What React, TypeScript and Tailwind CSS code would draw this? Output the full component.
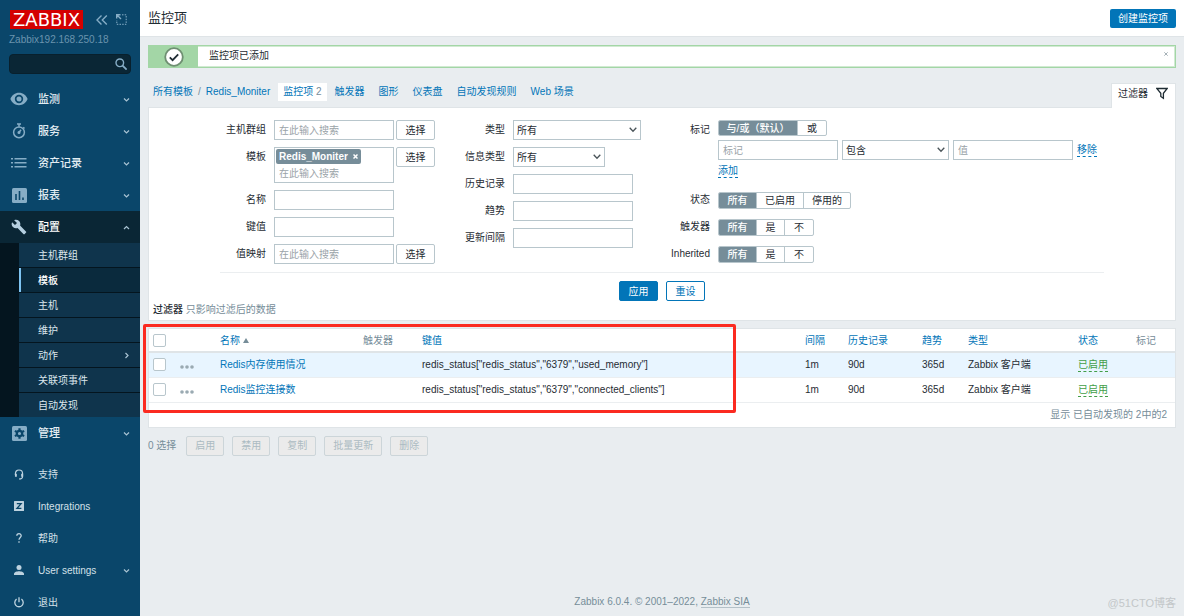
import React from "react";

type IconName =
  | "eye" | "watch" | "list" | "chart" | "wrench" | "gear"
  | "support" | "z" | "help" | "user" | "power";

function NavIcon({ name }: { name: IconName }) {
  switch (name) {
    case "eye":
      return (
        <svg width="18" height="14" viewBox="0 0 18 14" aria-hidden="true">
          <path fill="currentColor" fillRule="evenodd" d="M9 0.8C5 0.8 1.8 3.3.4 7 1.8 10.7 5 13.2 9 13.2s7.200-2.500 8.600-6.200C16.200 3.300 13 .8 9 .8Zm0 10.400A4.200 4.200 0 1 1 9 2.800a4.200 4.200 0 0 1 0 8.400Zm0-1.700a2.500 2.500 0 1 0 0-5 2.500 2.500 0 0 0 0 5Z" />
        </svg>
      );
    case "watch":
      return (
        <svg width="14" height="16" viewBox="0 0 14 16" fill="none" stroke="currentColor" strokeWidth="1.500" aria-hidden="true">
          <circle cx="7" cy="9.300" r="5.400" />
          <path d="M5 1.100h4M7 1.500v2.200M11.200 4.200l1.300 1.300M7 9.500l2-2.800" />
          <circle cx="7" cy="9.500" r="0.800" fill="currentColor" />
        </svg>
      );
    case "list":
      return (
        <svg width="16" height="12" viewBox="0 0 16 12" fill="none" stroke="currentColor" strokeWidth="1.500" aria-hidden="true">
          <path d="M0 1.800h2M0 5.800h2M0 9.800h2M3.500 1.800h12M3.500 5.800h12M3.500 9.800h12" />
        </svg>
      );
    case "chart":
      return (
        <svg width="15" height="15" viewBox="0 0 15 15" aria-hidden="true">
          <rect width="15" height="15" rx="1.500" fill="currentColor" />
          <path d="M4 6v6M7.500 3v9M11 9.500V12" stroke="#0a466a" strokeWidth="1.600" />
        </svg>
      );
    case "wrench":
      return (
        <svg width="16" height="16" viewBox="0 0 24 24" aria-hidden="true">
          <path fill="currentColor" d="m22.700 19-9.100-9.100c.9-2.300.4-5-1.500-6.900-2-2-5-2.400-7.400-1.300L9 6 6 9 1.600 4.700C.4 7.100.9 10.100 2.900 12.100c1.900 1.900 4.600 2.400 6.900 1.500l9.100 9.100c.4.400 1 .4 1.400 0l2.300-2.300c.5-.4.5-1.100.1-1.400z" />
        </svg>
      );
    case "gear":
      return (
        <svg width="15" height="15" viewBox="0 0 15 15" aria-hidden="true">
          <rect width="15" height="15" rx="1.500" fill="currentColor" />
          <circle cx="7.500" cy="7.500" r="2.700" fill="none" stroke="#0a466a" strokeWidth="2.200" />
          <path d="M7.500 2.200v2M7.500 10.800v2M2.900 4.850l1.700 1M10.400 9.150l1.700 1M2.900 10.150l1.700-1M10.400 5.850l1.700-1" stroke="#0a466a" strokeWidth="2.200" />
        </svg>
      );
    case "support":
      return (
        <svg width="10" height="11" viewBox="0 0 10 11" fill="none" stroke="currentColor" strokeWidth="1.200" aria-hidden="true">
          <path d="M1.400 6V4.800C1.400 2.500 2.900 1 5 1s3.600 1.500 3.600 3.800V7.200C8.600 8.900 7.300 10 5 10" />
          <path d="M1.900 4.700v3M8.100 4.700v3" strokeWidth="1.900" />
        </svg>
      );
    case "z":
      return (
        <svg width="10" height="10" viewBox="0 0 10 10" aria-hidden="true">
          <rect width="10" height="10" rx="0.500" fill="currentColor" />
          <path d="M2.800 2.700h4.300L3 7.300h4.400" fill="none" stroke="#0a466a" strokeWidth="1.300" />
        </svg>
      );
    case "help":
      return (
        <svg width="8" height="10" viewBox="0 0 8 10" fill="none" stroke="currentColor" strokeWidth="1.300" aria-hidden="true">
          <path d="M1.800 2.800C1.900 0 6.200 0 6.200 2.700 6.200 4.400 4 4.500 4 6.800M4 8.300v1.500" />
        </svg>
      );
    case "user":
      return (
        <svg width="10" height="10" viewBox="0 0 10 10" fill="currentColor" aria-hidden="true">
          <circle cx="5" cy="2.600" r="2.500" />
          <path d="M0 10V8.700C0 7 3.200 6.200 5 6.200s5 .8 5 2.500V10Z" />
        </svg>
      );
    case "power":
      return (
        <svg width="10" height="11" viewBox="0 0 10 11" fill="none" stroke="currentColor" strokeWidth="1.300" aria-hidden="true">
          <path d="M5 .3v5M2.600 2.100a4.200 4.200 0 1 0 4.800 0" />
        </svg>
      );
  }
}

function Chevron({ dir }: { dir: "up" | "down" | "right" }) {
  const d = { up: "M1 5 3.500 2.500 6 5", down: "M1 2.500 3.500 5 6 2.500", right: "M2.500 1 5 3.500 2.500 6" }[dir];
  return (
    <svg width="7" height="7" viewBox="0 0 7 7" fill="none" stroke="currentColor" strokeWidth="1.200" aria-hidden="true">
      <path d={d} />
    </svg>
  );
}

const mainNav: { label: string; icon: IconName }[] = [
  { label: "监测", icon: "eye" },
  { label: "服务", icon: "watch" },
  { label: "资产记录", icon: "list" },
  { label: "报表", icon: "chart" },
];
const subNav = ["主机群组", "模板", "主机", "维护", "动作", "关联项事件", "自动发现"];
const userNav: { label: string; icon: IconName; more?: boolean }[] = [
  { label: "支持", icon: "support" },
  { label: "Integrations", icon: "z" },
  { label: "帮助", icon: "help" },
  { label: "User settings", icon: "user", more: true },
  { label: "退出", icon: "power" },
];

function NavRow({ label, icon, open = false }: { label: string; icon: IconName; open?: boolean }) {
  return (
    <a
      href="#"
      className={`flex h-8 shrink-0 items-center pr-[10px] text-[11px] font-medium ${open ? "bg-[#0a2635] text-white" : "text-[#e3edf3]"}`}
    >
      <span className={`flex w-[38px] justify-center ${open ? "text-[#b5cfe0]" : "text-[#86adc6]"}`}>
        <NavIcon name={icon} />
      </span>
      <span className="flex-1">{label}</span>
      <span className="text-[#a9c3d3]">
        <Chevron dir={open ? "up" : "down"} />
      </span>
    </a>
  );
}

function Sidebar() {
  return (
    <aside className="sticky top-0 flex h-screen w-[140px] shrink-0 flex-col overflow-hidden bg-[#0a466a] text-[10px]">
      <div className="flex shrink-0 items-center pt-[10px] pl-[10px]">
        <a href="#" className="flex h-[19px] w-[73px] items-center justify-center bg-[#d40000] font-['DejaVu_Sans',sans-serif] text-[18px] leading-none text-white">
          ZABBIX
        </a>
        <button type="button" aria-label="收起侧边栏" className="ml-[13px] text-[#86adc6]">
          <svg width="12" height="10" viewBox="0 0 12 10" fill="none" stroke="currentColor" strokeWidth="1.400">
            <path d="M5.500.5 1 5l4.500 4.500M10.800.5 6.300 5l4.500 4.500" />
          </svg>
        </button>
        <button type="button" aria-label="隐藏侧边栏" className="ml-2 text-[#86adc6]">
          <svg width="11" height="11" viewBox="0 0 11 11" fill="none" stroke="currentColor">
            <path d="M6 .8h4.200v9.500H.8V6" strokeDasharray="1.500 1.200" />
            <path d="M.7 4.500V.7h3.800M1 1l4 4" strokeWidth="1.400" />
          </svg>
        </button>
      </div>
      <div className="mt-1 shrink-0 pl-[9px] leading-[14px] text-[#6b94ae]">Zabbix192.168.250.18</div>
      <form className="mx-[9px] mt-[7px] mb-[9px] flex h-5 shrink-0 items-center rounded-sm border border-[#08202d] bg-[#0a2635] pr-[3px]">
        <input aria-label="搜索" className="h-full min-w-0 flex-1 bg-transparent px-1 text-white outline-none" />
        <button type="button" aria-label="搜索" className="text-[#86adc6]">
          <svg width="12" height="12" viewBox="0 0 12 12" fill="none" stroke="currentColor" strokeWidth="1.400">
            <circle cx="4.800" cy="4.800" r="3.800" />
            <path d="m7.600 7.600 4 4" strokeWidth="1.800" />
          </svg>
        </button>
      </form>
      <nav className="flex shrink-0 flex-col">
        {mainNav.map((n) => (
          <NavRow key={n.label} {...n} />
        ))}
        <NavRow label="配置" icon="wrench" open />
        <ul className="flex flex-col gap-px bg-[#04151f] pl-[19px]">
          {subNav.map((s) => (
            <li key={s}>
              <a
                href="#"
                className={`flex h-6 items-center border-l-2 pr-[10px] pl-[17px] ${
                  s === "模板" ? "border-[#7fc4f2] bg-[#0a2a3d] font-medium text-white" : "border-[#0f344c] bg-[#0f344c] text-[#dbe6ec]"
                }`}
              >
                <span className="flex-1">{s}</span>
                {s === "动作" && (
                  <span className="text-[#a9c3d3]">
                    <Chevron dir="right" />
                  </span>
                )}
              </a>
            </li>
          ))}
        </ul>
        <NavRow label="管理" icon="gear" />
      </nav>
      <nav className="mt-[9px] flex shrink-0 flex-col">
        {userNav.map((n) => (
          <a key={n.label} href="#" className="flex h-8 items-center pr-[10px] text-[#d3e0e8]">
            <span className="flex w-[38px] justify-center text-[#bdd2df]">
              <NavIcon name={n.icon} />
            </span>
            <span className="flex-1">{n.label}</span>
            {n.more && (
              <span className="text-[#a9c3d3]">
                <Chevron dir="down" />
              </span>
            )}
          </a>
        ))}
      </nav>
    </aside>
  );
}

function TextField({ id, label, placeholder }: { id: string; label?: string; placeholder?: string }) {
  return (
    <input
      id={id}
      aria-label={label}
      placeholder={placeholder}
      className="h-5 w-[120px] border border-[#b8c6cc] bg-white px-1 outline-none placeholder:text-[#9aa3a8]"
    />
  );
}

function SelectField({ id, label, value, width }: { id: string; label?: string; value: string; width: string }) {
  return (
    <div className={`relative ${width}`}>
      <select id={id} aria-label={label} className="h-5 w-full appearance-none border border-[#b8c6cc] bg-white pr-4 pl-[3px] outline-none">
        <option>{value}</option>
      </select>
      <svg className="pointer-events-none absolute top-[7px] right-1" width="8" height="6" viewBox="0 0 8 6" fill="none" stroke="#4a5459" strokeWidth="1.300" aria-hidden="true">
        <path d="M.7.8 4 4.300 7.300.8" />
      </svg>
    </div>
  );
}

function PickButton() {
  return (
    <button type="button" className="h-5 w-[39px] rounded-xs border border-[#b8c6cc] bg-white">
      选择
    </button>
  );
}

function Row({ id, label, labelWidth, children }: { id: string; label: string; labelWidth: string; children: React.ReactNode }) {
  return (
    <div className="flex items-start">
      <label htmlFor={id} className={`shrink-0 text-right leading-5 whitespace-nowrap ${labelWidth}`}>
        {label}
      </label>
      <div className="ml-2 flex gap-[2px]">{children}</div>
    </div>
  );
}

function Segmented({ id, name, options, className = "h-[17px]" }: { id?: string; name: string; options: [string, string][]; className?: string }) {
  return (
    <div role="radiogroup" aria-label={name} className={`flex w-fit divide-x divide-[#b8c6cc] overflow-hidden rounded-xs border border-[#b8c6cc] bg-white ${className}`}>
      {options.map(([text, width], i) => (
        <label key={text} className={`relative flex items-center justify-center has-checked:bg-[#768d99] has-checked:font-medium has-checked:text-white ${width}`}>
          <input id={i === 0 ? id : undefined} type="radio" name={name} defaultChecked={i === 0} className="sr-only" />
          {text}
        </label>
      ))}
    </div>
  );
}

function Filter() {
  const link = "border-b border-dashed border-[#0275b8] leading-[12px] text-[#0275b8]";
  return (
    <form className="border border-[#dfe4e7] bg-white pt-3 pb-[3px]">
      <div className="mx-auto flex w-[884px] max-w-full gap-[30px] border-b border-[#ebeef0] pb-2">
        <div className="flex flex-col gap-[7px]">
          <Row id="groups" label="主机群组" labelWidth="w-[46px]">
            <TextField id="groups" placeholder="在此输入搜索" />
            <PickButton />
          </Row>
          <Row id="templates" label="模板" labelWidth="w-[46px]">
            <div className="h-9 w-[120px] border border-[#b8c6cc] p-px">
              <span className="flex h-[15px] w-fit items-center rounded-xs bg-[#768d99] px-[3px] font-bold text-white">
                Redis_Moniter
                <button type="button" aria-label="移除 Redis_Moniter" className="ml-[5px]">
                  <svg width="5" height="5" viewBox="0 0 5 5" stroke="currentColor" strokeWidth="1.500">
                    <path d="m.5.5 4 4m0-4-4 4" />
                  </svg>
                </button>
              </span>
              <input id="templates" placeholder="在此输入搜索" className="block h-[18px] w-full px-[3px] outline-none placeholder:text-[#9aa3a8]" />
            </div>
            <PickButton />
          </Row>
          <Row id="name" label="名称" labelWidth="w-[46px]"><TextField id="name" /></Row>
          <Row id="key" label="键值" labelWidth="w-[46px]"><TextField id="key" /></Row>
          <Row id="valuemap" label="值映射" labelWidth="w-[46px]">
            <TextField id="valuemap" placeholder="在此输入搜索" />
            <PickButton />
          </Row>
        </div>
        <div className="flex flex-col gap-[7px]">
          <Row id="type" label="类型" labelWidth="w-10"><SelectField id="type" value="所有" width="w-32" /></Row>
          <Row id="info" label="信息类型" labelWidth="w-10"><SelectField id="info" value="所有" width="w-[92px]" /></Row>
          <Row id="history" label="历史记录" labelWidth="w-10"><TextField id="history" /></Row>
          <Row id="trends" label="趋势" labelWidth="w-10"><TextField id="trends" /></Row>
          <Row id="interval" label="更新间隔" labelWidth="w-10"><TextField id="interval" /></Row>
        </div>
        <div className="flex flex-col gap-[7px]">
          <Row id="tag" label="标记" labelWidth="w-[39px]">
            <div className="flex flex-col gap-1">
              <Segmented name="标记条件" className="h-4" options={[["与/或（默认）", "w-[79px]"], ["或", "w-7"]]} />
              <div className="flex items-center gap-1">
                <TextField id="tag" placeholder="标记" />
                <SelectField id="operator" label="运算符" value="包含" width="w-[107px]" />
                <TextField id="tagvalue" label="值" placeholder="值" />
                <button type="button" className={link}>移除</button>
              </div>
              <button type="button" className={`mt-px w-fit ${link}`}>添加</button>
            </div>
          </Row>
          <div className="mt-[5px] flex flex-col gap-[7px]">
            <Row id="status" label="状态" labelWidth="w-[39px]">
              <div className="flex h-5 items-center">
                <Segmented id="status" name="状态" options={[["所有", "w-[38px]"], ["已启用", "w-[47px]"], ["停用的", "w-[46px]"]]} />
              </div>
            </Row>
            <Row id="triggers" label="触发器" labelWidth="w-[39px]">
              <div className="flex h-5 items-center">
                <Segmented id="triggers" name="触发器" options={[["所有", "w-[38px]"], ["是", "w-7"], ["不", "w-7"]]} />
              </div>
            </Row>
            <Row id="inherited" label="Inherited" labelWidth="w-[39px]">
              <div className="flex h-5 items-center">
                <Segmented id="inherited" name="Inherited" options={[["所有", "w-[38px]"], ["是", "w-7"], ["不", "w-7"]]} />
              </div>
            </Row>
          </div>
        </div>
      </div>
      <div className="mt-2 flex justify-center gap-2">
        <button type="button" className="h-5 w-[39px] rounded-xs border border-[#0275b8] bg-[#0275b8] text-white">应用</button>
        <button type="button" className="h-5 w-[39px] rounded-xs border border-[#0275b8] bg-white text-[#0275b8]">重设</button>
      </div>
      <p className="mt-[2px] pl-1 leading-[14px] text-[#768d99]">
        <span className="font-medium text-[#1f2c33]">过滤器</span> 只影响过滤后的数据
      </p>
    </form>
  );
}

const items = [
  { name: "Redis内存使用情况", key: 'redis_status["redis_status","6379","used_memory"]' },
  { name: "Redis监控连接数", key: 'redis_status["redis_status","6379","connected_clients"]' },
];

function Check({ label }: { label: string }) {
  return <input type="checkbox" aria-label={label} className="block size-[13px] appearance-none rounded-xs border border-[#b8c6cc] bg-white" />;
}

function ItemsTable() {
  const th = "p-0 text-left font-normal";
  return (
    <div className="relative mt-[7px] border border-[#dfe4e7] bg-white">
      <table className="w-full table-fixed border-collapse">
        <colgroup>
          <col className="w-[31px]" />
          <col className="w-10" />
          <col className="w-[143px]" />
          <col className="w-[59px]" />
          <col />
          <col className="w-[43px]" />
          <col className="w-[74px]" />
          <col className="w-[46px]" />
          <col className="w-[110px]" />
          <col className="w-[58px]" />
          <col className="w-[39px]" />
        </colgroup>
        <thead>
          <tr className="h-[23px] border-b-2 border-[#dfe4e7] text-[#0275b8]">
            <th className="p-0 pl-1"><Check label="全选" /></th>
            <th className={th}></th>
            <th className={th}>
              <a href="#" className="flex items-center gap-[3px]">
                名称
                <svg width="6" height="5" viewBox="0 0 6 5" aria-hidden="true"><path d="M3 0 6 5H0Z" fill="#768d99" /></svg>
              </a>
            </th>
            <th className={`${th} text-[#768d99]`}>触发器</th>
            <th className={th}><a href="#">键值</a></th>
            <th className={th}><a href="#">间隔</a></th>
            <th className={th}><a href="#">历史记录</a></th>
            <th className={th}><a href="#">趋势</a></th>
            <th className={th}><a href="#">类型</a></th>
            <th className={th}><a href="#">状态</a></th>
            <th className={`${th} text-[#768d99]`}>标记</th>
          </tr>
        </thead>
        <tbody>
          {items.map((it) => (
            <tr key={it.key} className="h-[25px] border-b border-[#ebeef0] first:bg-[#e8f5ff]">
              <td className="p-0 pl-1"><Check label={it.name} /></td>
              <td className="p-0">
                <button type="button" aria-label="更多操作" className="block pt-1 text-[#9aaab2]">
                  <svg width="14" height="4" viewBox="0 0 14 4" fill="currentColor">
                    <circle cx="2" cy="2" r="1.800" /><circle cx="7" cy="2" r="1.800" /><circle cx="12" cy="2" r="1.800" />
                  </svg>
                </button>
              </td>
              <td className="p-0"><a href="#" className="text-[#0275b8]">{it.name}</a></td>
              <td className="p-0"></td>
              <td className="truncate p-0">{it.key}</td>
              <td className="p-0">1m</td>
              <td className="p-0">90d</td>
              <td className="p-0">365d</td>
              <td className="p-0">Zabbix 客户端</td>
              <td className="p-0"><a href="#" className="inline-block border-b border-dashed border-[#429e47] leading-[12px] text-[#429e47]">已启用</a></td>
              <td className="p-0"></td>
            </tr>
          ))}
        </tbody>
      </table>
      <div className="pr-2 text-right leading-6 text-[#768d99]">显示 已自动发现的 2中的2</div>
      <div className="pointer-events-none absolute -top-[5px] -left-[6px] h-[89px] w-[593px] rounded-xs border-3 border-[#fb2a20]" />
    </div>
  );
}

export default function App() {
  const tabs = ["触发器", "图形", "仪表盘", "自动发现规则", "Web 场景"];
  return (
    <div className="flex min-h-screen bg-[#e9edf0] font-['Liberation_Sans','Noto_Sans_CJK_SC',sans-serif] text-[10px] text-[#1f2c33]">
      <Sidebar />
      <div className="flex min-w-0 flex-1 flex-col">
        <header className="flex h-[37px] shrink-0 items-center justify-between border-b border-[#dfe4e7] bg-white px-2">
          <h1 className="text-[13px]">监控项</h1>
          <button type="button" className="h-[19px] rounded-xs bg-[#0275b8] px-2 text-white">创建监控项</button>
        </header>
        <main className="flex flex-1 flex-col px-2 pt-2">
          <div role="status" className="flex h-[23px] border border-[#a3d6a6] bg-white ring-1 ring-[#a3d6a6]/50 ring-inset">
            <span className="flex w-[49px] items-end justify-center bg-[#a3d6a6]">
              <svg width="20" height="20" viewBox="0 0 20 20" fill="none" aria-hidden="true">
                <circle cx="10" cy="10" r="8.800" fill="#fff" stroke="#6f8f72" strokeWidth="1.800" />
                <path d="m5.800 10.400 2.800 2.800 5.600-5.800" stroke="#1f2c33" strokeWidth="1.800" />
              </svg>
            </span>
            <span className="flex-1 pl-[11px] leading-5">监控项已添加</span>
            <button type="button" aria-label="关闭" className="flex pt-[6px] pr-[7px] text-[#a5b1b7]">
              <svg width="4" height="4" viewBox="0 0 4 4" stroke="currentColor"><path d="m.3.3 3.400 3.400m0-3.400L.3 3.700" /></svg>
            </button>
          </div>
          <div className="mt-[15px] flex h-6 items-stretch justify-between">
            <nav className="flex items-start pl-[5px] leading-[18px] whitespace-nowrap text-[#0275b8]">
              <a href="#">所有模板</a>
              <span className="mx-[5px] text-[#768d99]">/</span>
              <a href="#">Redis_Moniter</a>
              <a href="#" className="mr-2 ml-2 bg-white px-[5px]">
                监控项 <span className="text-[#768d99]">2</span>
              </a>
              <div className="flex gap-[14px]">
                {tabs.map((t) => (
                  <a key={t} href="#">{t}</a>
                ))}
              </div>
            </nav>
            <button type="button" className="relative -mb-px flex items-start gap-2 border border-b-0 border-[#dfe4e7] bg-white pt-[3px] pr-[7px] pl-[6px] leading-[14px]">
              过滤器
              <svg width="12" height="13" viewBox="0 0 12 13" fill="none" stroke="#1f2c33" strokeWidth="1.300" aria-hidden="true">
                <path d="M.8 1.500h10.400L7.400 6.300v5L4.800 9.500V6.300Z" />
              </svg>
            </button>
          </div>
          <Filter />
          <ItemsTable />
          <div className="mt-2 flex items-center gap-2">
            <span className="mr-[2px] text-[#768d99]">0 选择</span>
            {["启用", "禁用", "复制", "批量更新", "删除"].map((b) => (
              <button key={b} type="button" disabled className="h-5 rounded-xs border border-[#ccd5d9] bg-[#ebebeb] px-2 text-[#acbbc2]">
                {b}
              </button>
            ))}
          </div>
          <footer className="relative mt-auto pt-4 pb-[7px] text-center leading-[14px] text-[#768d99]">
            Zabbix 6.0.4. © 2001–2022, <a href="#" className="border-b border-[#b4c1c8]">Zabbix SIA</a>
            <span className="absolute right-0 bottom-[6px] text-[11px] text-[#c3c7c9]">@51CTO博客</span>
          </footer>
        </main>
      </div>
    </div>
  );
}
